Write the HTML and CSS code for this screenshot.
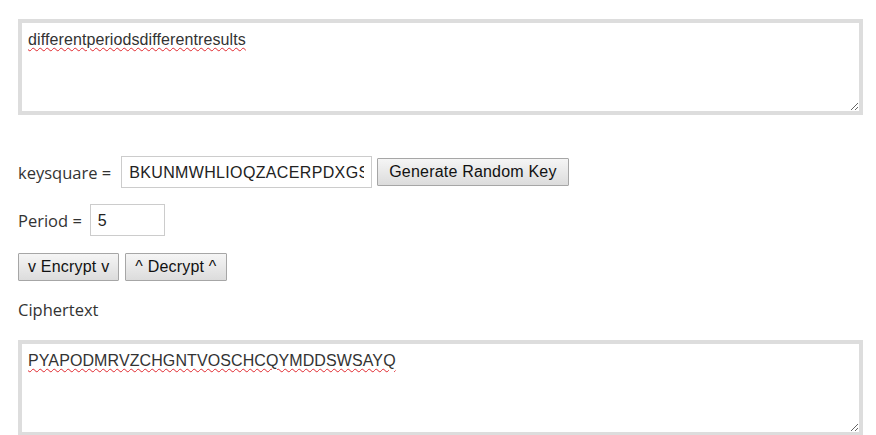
FILE: index.html
```html
<!DOCTYPE html>
<html>
<head>
<meta charset="utf-8">
<link rel="stylesheet" href="styles.css">
</head>
<body>
<div class="page">
  <textarea class="box" spellcheck="false">differentperiodsdifferentresults</textarea>
  <div class="row key-row">
    <label class="lbl">keysquare =</label>
    <input class="field key" type="text" value="BKUNMWHLIOQZACERPDXGSTVFY">
    <button class="btn wide">Generate Random Key</button>
  </div>
  <div class="row period-row">
    <label class="lbl">Period =</label>
    <input class="field period" type="text" value="5">
  </div>
  <div class="row btn-row">
    <button class="btn">v Encrypt v</button>
    <button class="btn">^ Decrypt ^</button>
  </div>
  <div class="lbl cipher-lbl">Ciphertext</div>
  <textarea class="box out" spellcheck="false">PYAPODMRVZCHGNTVOSCHCQYMDDSWSAYQ</textarea>
</div>
</body>
</html>
```
FILE: styles.css
```css
html, body {
  margin: 0;
  padding: 0;
  background: #fff;
}
.page {
  padding: 19px 13px 0 18px;
  display: flex;
  flex-direction: column;
  align-items: flex-start;
}
.box {
  display: block;
  box-sizing: border-box;
  width: 845px;
  height: 96px;
  border: 4px solid #dddddd;
  padding: 8px 6px;
  margin: 0;
  font-family: "Liberation Sans", Arial, sans-serif;
  font-size: 16px;
  letter-spacing: 0.1px;
  color: #333;
  outline: none;
  text-decoration: underline wavy #e0282e;
  text-decoration-thickness: 1px;
  text-underline-offset: 2px;
}
.row {
  display: flex;
  align-items: center;
  gap: 6px;
}
.key-row {
  margin-top: 41px;
}
.key-row .lbl {
  margin-right: 4px;
}
.period-row {
  margin-top: 16px;
}
.btn-row {
  margin-top: 17px;
}
.lbl {
  font-family: "Open Sans", "Noto Sans", sans-serif;
  font-size: 16.5px;
  color: #333;
  margin-right: 2px;
}
.field {
  box-sizing: border-box;
  height: 32px;
  border: 1px solid #cccccc;
  padding: 2px 7px 0;
  margin: 0;
  font-family: "Liberation Sans", Arial, sans-serif;
  font-size: 16px;
  letter-spacing: 0.35px;
  color: #222;
  outline: none;
}
.key {
  width: 251px;
}
.period {
  width: 75px;
}
.btn {
  box-sizing: border-box;
  height: 28px;
  padding: 0 9px;
  margin: 0;
  border: 1px solid #a6a6a6;
  border-radius: 1px;
  background: linear-gradient(#f5f5f5, #dcdcdc);
  font-family: "Liberation Sans", Arial, sans-serif;
  font-size: 16px;
  letter-spacing: 0.2px;
  color: #111;
}
.btn.wide {
  padding: 0 11px;
  margin-left: -1px;
}
.cipher-lbl {
  margin-top: 18px;
  line-height: 22px;
}
.out {
  margin-top: 19px;
  height: 96px;
}
```
